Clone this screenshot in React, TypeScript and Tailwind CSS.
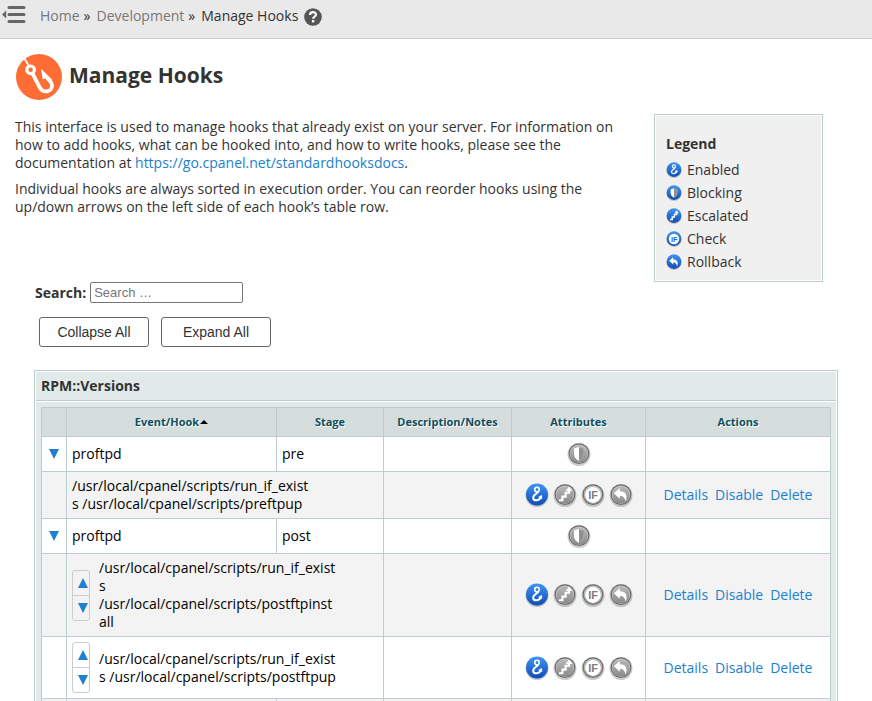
import React from "react";

type Attribute = "enabled" | "blocking" | "escalated" | "check" | "rollback";

function Glyph({ kind, cut }: { kind: Attribute; cut: string }) {
  switch (kind) {
    case "enabled":
      return (
        <g fill="none" stroke="#fff" strokeLinecap="round">
          <circle cx="12" cy="6.6" r="2.3" strokeWidth="1.6" />
          <path d="M13 9C12.4 10.6 7.8 12 8.2 15C8.8 18.4 14.6 18.2 16 13.8" strokeWidth="2" />
          <path d="M13.9 13.9L16.6 12.4L16.9 15.2Z" fill="#fff" strokeWidth="0.6" />
        </g>
      );
    case "blocking":
      return (
        <g>
          <path d="M12 4.8L7 6.6V12C7 15.2 9.2 17.6 12 19Z" fill="#fff" />
          <path d="M12 4.8L17 6.6V12C17 15.2 14.8 17.6 12 19Z" fill="#909090" />
          <path d="M12.4 5.2L16.8 6.8V12C16.8 15.2 14.6 17.4 12.4 18.6" fill="none" stroke="#bdbdbd" strokeWidth="0.6" />
        </g>
      );
    case "escalated":
      return (
        <g>
          <path d="M6 17.2H9.4V13.6H12.6V9.8H16V6.4" fill="none" stroke="#fff" strokeWidth="2.1" />
          <path d="M16 3.4L19.4 8H12.6Z" fill="#fff" />
        </g>
      );
    case "check":
      return (
        <g>
          <circle cx="12" cy="12" r="7.9" fill="#fff" />
          <text x="12.2" y="15.8" textAnchor="middle" fontSize="11" fontWeight="700" fontFamily="'Liberation Sans', Arial, sans-serif" fill={cut}>
            IF
          </text>
        </g>
      );
    case "rollback":
      return (
        <path d="M4.8 10.2L10.8 5V8.2C16 7.8 19.4 11.8 16.6 18.6C16 14.8 14.4 12.9 10.8 12.9V15.8Z" fill="#fff" />
      );
  }
}

function AttributeIcon({ kind, active, size }: { kind: Attribute; active?: boolean; size: string }) {
  const id = React.useId();
  return (
    <svg viewBox="0 0 24 24" className={`block shrink-0 ${size}`} aria-label={kind} role="img">
      <defs>
        <linearGradient id={id} x1="0" y1="0" x2="0" y2="1">
          <stop offset="0" stopColor={active ? "#3f95f5" : "#b9b9b9"} />
          <stop offset="1" stopColor={active ? "#0f4cb4" : "#8a8a8a"} />
        </linearGradient>
      </defs>
      <circle cx="12" cy="12.5" r="11.5" fill="#000" opacity="0.2" />
      {active ? (
        <circle cx="12" cy="11.5" r="11" fill={`url(#${id})`} />
      ) : (
        <g>
          <circle cx="12" cy="11.6" r="10.4" fill="#6c6c6c" />
          <circle cx="12" cy="11.6" r="9.2" fill="#cdcdcd" />
          <circle cx="12" cy="11.9" r="8.7" fill={`url(#${id})`} />
        </g>
      )}
      <Glyph kind={kind} cut={active ? "#1f6ad2" : "#7d7d7d"} />
    </svg>
  );
}

function Triangle({ up }: { up?: boolean }) {
  return (
    <svg viewBox="0 0 10 10" className="block h-[10px] w-[10px]" aria-hidden="true">
      <path d={up ? "M5 0L10 10H0Z" : "M0 0H10L5 10Z"} fill="#2080cf" />
    </svg>
  );
}

const legend: { kind: Attribute; label: string }[] = [
  { kind: "enabled", label: "Enabled" },
  { kind: "blocking", label: "Blocking" },
  { kind: "escalated", label: "Escalated" },
  { kind: "check", label: "Check" },
  { kind: "rollback", label: "Rollback" },
];

const cell = "border border-[#bccccf] px-[5px] py-[5px]";

function EventRow({ name, stage }: { name: string; stage: string }) {
  return (
    <tr className="h-[35px] bg-white">
      <td className="border border-[#bccccf] p-0">
        <button type="button" aria-label={`Collapse ${name} ${stage}`} className="mx-auto block">
          <Triangle />
        </button>
      </td>
      <td className={cell}>{name}</td>
      <td className={cell}>{stage}</td>
      <td className={cell}></td>
      <td className={cell}>
        <div className="flex justify-center">
          <AttributeIcon kind="blocking" size="h-6 w-6" />
        </div>
      </td>
      <td className={cell}></td>
    </tr>
  );
}

function HookRow({ script, sortable, shaded }: { script: string; sortable?: boolean; shaded?: boolean }) {
  return (
    <tr className={shaded ? "bg-[#f3f3f3]" : "bg-white"}>
      <td className={cell}></td>
      <td className={cell} colSpan={2}>
        <div className="flex items-center gap-[9px]">
          {sortable && (
            <div className="flex h-[51px] w-[18px] shrink-0 flex-col rounded-[3px] border border-[#ccc]">
              <button type="button" aria-label="Move up" className="flex flex-1 items-center justify-center border-b border-[#ccc] pl-1">
                <Triangle up />
              </button>
              <button type="button" aria-label="Move down" className="flex flex-1 items-center justify-center pl-1">
                <Triangle />
              </button>
            </div>
          )}
          <div className="w-[240px] break-words">{script}</div>
        </div>
      </td>
      <td className={cell}></td>
      <td className={cell}>
        <div className="flex justify-center gap-1">
          <AttributeIcon kind="enabled" active size="h-6 w-6" />
          <AttributeIcon kind="escalated" size="h-6 w-6" />
          <AttributeIcon kind="check" size="h-6 w-6" />
          <AttributeIcon kind="rollback" size="h-6 w-6" />
        </div>
      </td>
      <td className={cell}>
        <div className="flex justify-center gap-[7px] text-[#2080cf]">
          <a href="#details">Details</a>
          <a href="#disable">Disable</a>
          <a href="#delete">Delete</a>
        </div>
      </td>
    </tr>
  );
}

export default function App() {
  return (
    <div className="h-screen overflow-hidden bg-white font-['Open_Sans','Noto_Sans',sans-serif] text-[14px] leading-[18px] text-[#333]">
      <header className="flex h-[39px] items-start border-b border-[#ccc] bg-[#e9e9e9]">
        <button type="button" aria-label="Toggle menu" className="mt-[6px] ml-[2px]">
          <svg viewBox="0 0 24 18" className="block h-[18px] w-6">
            <path d="M0 8.5L4.2 4.5V12.5Z" fill="#666" />
            <path d="M7 1.6H22M7 8.5H22M7 15.4H22" stroke="#666" strokeWidth="3" strokeLinecap="round" />
          </svg>
        </button>
        <nav aria-label="Breadcrumb" className="mt-[7px] ml-[14px] flex items-center">
          <a href="#home" className="text-[#777]">Home</a>
          <span className="ml-1">»</span>
          <a href="#development" className="ml-[6px] text-[#777]">Development</a>
          <span className="ml-1">»</span>
          <span className="ml-[6px]">Manage Hooks</span>
        </nav>
        <button type="button" aria-label="Help" className="mt-[8px] ml-[6px]">
          <svg viewBox="0 0 18 18" className="block h-[18px] w-[18px]">
            <circle cx="9" cy="9" r="8.8" fill="#555" />
            <path d="M6 7C6 3.2 12.2 3.4 12 6.8C11.9 8.6 9.1 8.8 9.1 10.8" fill="none" stroke="#fff" strokeWidth="2.2" />
            <rect x="7.9" y="12" width="2.4" height="2.4" fill="#fff" />
          </svg>
        </button>
      </header>

      <div className="flex items-center gap-[6px] pt-[14px] pl-[15px]">
        <svg viewBox="0 0 48 48" className="block h-12 w-12" aria-hidden="true">
          <circle cx="24" cy="24" r="23" fill="#ff6c34" />
          <path d="M9.5 5.5L14.5 14" stroke="#fff" strokeWidth="1.8" />
          <circle cx="15.6" cy="16.8" r="3.8" fill="none" stroke="#fff" strokeWidth="3.2" />
          <path d="M17.5 20.5L24.8 34.5C27.6 40.4 37.2 39.4 37 32.4C36.8 30 35 27.4 33 24.8" fill="none" stroke="#fff" strokeWidth="3.8" />
          <path d="M26 15.4L36.8 26.6L33.4 29.4L30.4 25.6L27.6 26.2Z" fill="#fff" />
        </svg>
        <h1 className="pb-1 text-[21px] leading-[28px] font-bold">Manage Hooks</h1>
      </div>

      <div className="mt-[13px] flex items-start justify-between pr-[49px] pl-[15px]">
        <div className="mt-1 w-[605px] space-y-2">
          <p>
            This interface is used to manage hooks that already exist on your server. For information on how to add hooks,
            what can be hooked into, and how to write hooks, please see the documentation at{" "}
            <a href="https://go.cpanel.net/standardhooksdocs" className="text-[#1a7fce]">
              https://go.cpanel.net/standardhooksdocs
            </a>
            .
          </p>
          <p>
            Individual hooks are always sorted in execution order. You can reorder hooks using the up/down arrows on the
            left side of each hook’s table row.
          </p>
        </div>
        <aside className="w-[169px] border border-[#bccccf] bg-white p-px">
          <div className="bg-[#f0f0f0] px-[10px] pt-[19px] pb-[7px]">
            <h2 className="leading-[18px] font-bold">Legend</h2>
            <ul className="mt-[5px]">
              {legend.map((item) => (
                <li key={item.kind} className="flex h-[23px] items-center gap-[5px]">
                  <AttributeIcon kind={item.kind} active size="h-4 w-4" />
                  {item.label}
                </li>
              ))}
            </ul>
          </div>
        </aside>
      </div>

      <div className="px-[34px]">
        <div className="flex items-center gap-1 pl-px">
          <label htmlFor="search" className="font-bold">Search:</label>
          <input
            id="search"
            type="text"
            placeholder="Search …"
            className="h-[21px] w-[153px] rounded-[2px] border border-[#767676] bg-white px-[3px] font-['Liberation_Sans',Arial,sans-serif] text-[13px] leading-[16px] placeholder:text-[#757575]"
          />
        </div>
        <div className="mt-[14px] flex gap-3 pl-[5px] font-['Liberation_Sans',Arial,sans-serif]">
          <button type="button" className="h-[30px] w-[110px] rounded-[3px] border border-[#666] bg-white">Collapse All</button>
          <button type="button" className="h-[30px] w-[110px] rounded-[3px] border border-[#666] bg-white">Expand All</button>
        </div>

        <section className="mt-[23px] border border-[#bccccf] bg-white p-px text-black">
          <h2 className="border-b border-[#bccccf] bg-[#e1e9e9] px-[5px] pt-[5px] pb-[5px] leading-[18px] font-bold text-[#333]">
            RPM::Versions
          </h2>
          <div className="mt-px bg-[#e1e9e9] p-[5px]">
            <table className="w-full table-fixed border-collapse">
              <colgroup>
                <col className="w-[25px]" />
                <col className="w-[210px]" />
                <col className="w-[107px]" />
                <col className="w-[128px]" />
                <col className="w-[134px]" />
                <col />
              </colgroup>
              <thead>
                <tr className="h-[29px] bg-[#d5dddd] text-[11px] text-[#0f4f60] text-shadow-[1px_1px_0_#fff]">
                  <th className="border border-[#bccccf]"></th>
                  <th className="border border-[#bccccf]">
                    <button type="button" className="inline-flex items-center gap-px font-bold text-shadow-[1px_1px_0_#fff]">
                      Event/Hook
                      <svg viewBox="0 0 8 4" className="h-1 w-2" aria-hidden="true">
                        <path d="M4 0L8 4H0Z" fill="#000" />
                      </svg>
                    </button>
                  </th>
                  <th className="border border-[#bccccf]">Stage</th>
                  <th className="border border-[#bccccf]">Description/Notes</th>
                  <th className="border border-[#bccccf]">Attributes</th>
                  <th className="border border-[#bccccf]">Actions</th>
                </tr>
              </thead>
              <tbody>
                <EventRow name="proftpd" stage="pre" />
                <HookRow script="/usr/local/cpanel/scripts/run_if_exists /usr/local/cpanel/scripts/preftpup" shaded />
                <EventRow name="proftpd" stage="post" />
                <HookRow script="/usr/local/cpanel/scripts/run_if_exists /usr/local/cpanel/scripts/postftpinstall" sortable shaded />
                <HookRow script="/usr/local/cpanel/scripts/run_if_exists /usr/local/cpanel/scripts/postftpup" sortable />
                <tr className="h-[35px] bg-[#f3f3f3]">
                  <td className={cell}></td>
                  <td className={cell}></td>
                  <td className={cell}></td>
                  <td className={cell}></td>
                  <td className={cell}></td>
                  <td className={cell}></td>
                </tr>
              </tbody>
            </table>
          </div>
        </section>
      </div>
    </div>
  );
}
